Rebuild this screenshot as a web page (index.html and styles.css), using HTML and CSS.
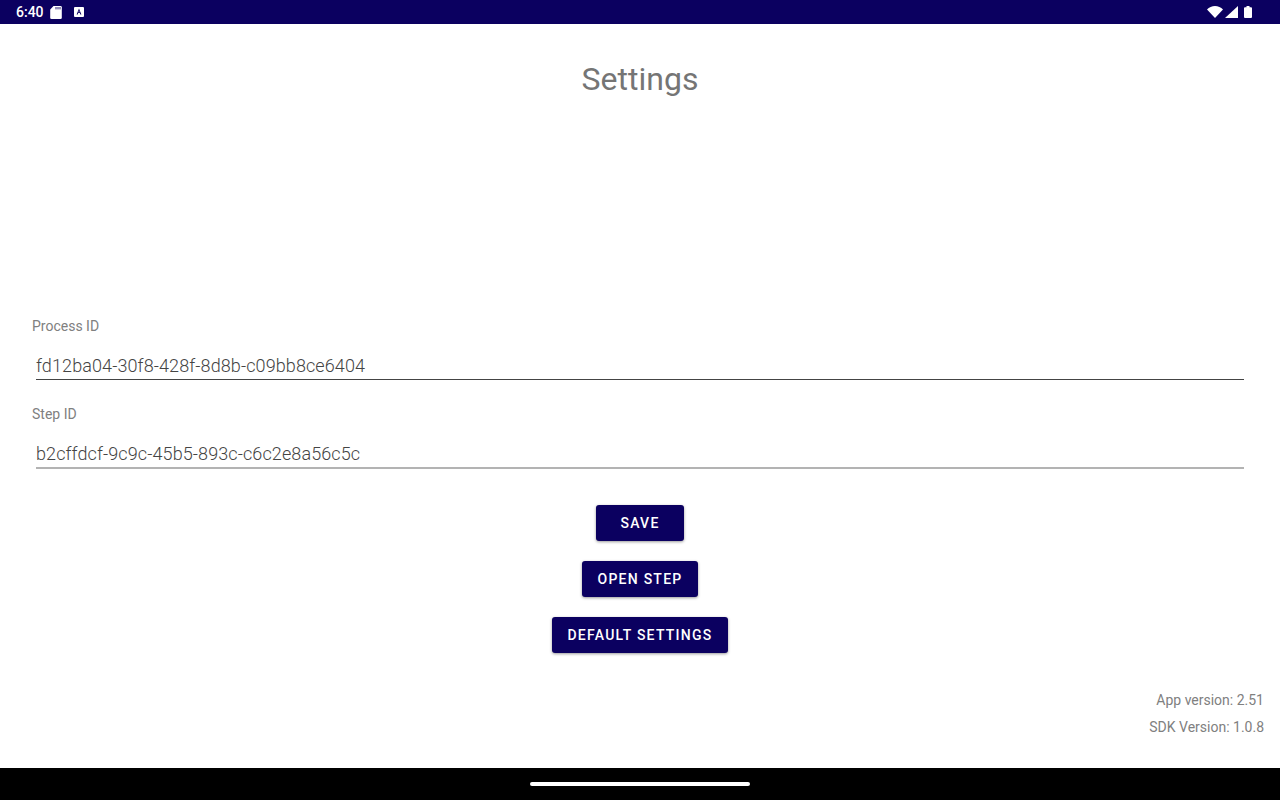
FILE: index.html
```html
<!DOCTYPE html>
<html lang="en">

<head>
    <meta charset="UTF-8">
    <title>Settings</title>
    <link rel="stylesheet" href="styles.css">
</head>

<body>
    <div class="status_bar">
        <div class="status_left">
            <span class="clock">6:40</span>
            <svg class="icon_sd" width="12" height="13" viewBox="0 0 12 13">
                <path d="M3.5 0H10.5a1.3 1.3 0 0 1 1.3 1.3V11.7a1.3 1.3 0 0 1-1.3 1.3H1.5a1.3 1.3 0 0 1-1.3-1.3V3.5Z" fill="#fff" />
                <path d="M6 1V3.4M8 1V3.4M10 1V3.4" stroke="#0b0060" stroke-width=".9" />
            </svg>
            <svg class="icon_a" width="10" height="10" viewBox="0 0 10 10">
                <rect width="10" height="10" rx="1" fill="#fff" />
                <path d="M5 1.6 7.4 7.4H6.3L5.8 6.1H4.2L3.7 7.4H2.6ZM5 3.6 4.5 5.2H5.5Z" fill="#0b0060" />
            </svg>
        </div>
        <div class="status_right">
            <svg class="icon_wifi" width="16" height="12" viewBox="0 0 16 12">
                <path d="M0 3.6C2 1.4 5 0 8 0s6 1.4 8 3.6L8 12Z" fill="#fff" />
            </svg>
            <svg class="icon_signal" width="13" height="12" viewBox="0 0 13 12">
                <path d="M13 0V12H0Z" fill="#fff" />
            </svg>
            <svg class="icon_battery" width="8" height="12" viewBox="0 0 8 12">
                <path d="M2.5 0H5.5V1.2H7a1 1 0 0 1 1 1V11a1 1 0 0 1-1 1H1a1 1 0 0 1-1-1V2.2a1 1 0 0 1 1-1H2.5Z" fill="#fff" />
            </svg>
        </div>
    </div>

    <div class="main">
        <h1 class="title">Settings</h1>

        <div class="form">
            <label class="field_label">Process ID</label>
            <div class="field_value field_focus">fd12ba04-30f8-428f-8d8b-c09bb8ce6404</div>
            <label class="field_label">Step ID</label>
            <div class="field_value">b2cffdcf-9c9c-45b5-893c-c6c2e8a56c5c</div>
        </div>

        <div class="buttons">
            <button class="btn">SAVE</button>
            <button class="btn">OPEN STEP</button>
            <button class="btn">DEFAULT SETTINGS</button>
        </div>

        <div class="versions">
            <p>App version: 2.51</p>
            <p>SDK Version: 1.0.8</p>
        </div>
    </div>

    <div class="nav_bar">
        <div class="home_pill"></div>
    </div>
</body>

</html>
```

FILE: styles.css
```css
* {
    margin: 0;
    padding: 0;
    box-sizing: border-box;
}

body {
    width: 1280px;
    height: 800px;
    display: flex;
    flex-direction: column;
    overflow: hidden;
    background-color: #fff;
    font-family: Roboto, "Liberation Sans", sans-serif;
}

.status_bar {
    display: flex;
    justify-content: space-between;
    align-items: center;
    height: 24px;
    padding: 0 28px 0 16px;
    color: #fff;
    background-color: #0b0060;
}

.status_left,
.status_right {
    display: flex;
    align-items: center;
}

.clock {
    font-size: 14px;
    font-weight: 500;
    margin-right: 6px;
}

.icon_sd {
    margin-right: 12px;
}

.icon_signal {
    margin-left: 2px;
}

.icon_battery {
    margin-left: 6px;
}

.main {
    flex: 1;
    display: flex;
    flex-direction: column;
}

.title {
    margin-top: 36px;
    height: 38px;
    line-height: 38px;
    text-align: center;
    font-size: 32px;
    font-weight: 400;
    color: #757575;
}

.form {
    margin-top: 218px;
    padding: 0 36px 0 32px;
}

.field_label {
    display: block;
    height: 20px;
    line-height: 20px;
    font-size: 14px;
    color: #808080;
}

.field_value {
    margin: 16px 0 0 4px;
    height: 29px;
    line-height: 28px;
    font-size: 18px;
    font-weight: 300;
    letter-spacing: .1px;
    color: #444;
    border-bottom: 2px solid #b3b3b3;
}

.field_focus {
    height: 28px;
    margin-bottom: 24px;
    border-bottom: 1px solid #444;
}

.buttons {
    margin-top: 36px;
    display: flex;
    flex-direction: column;
    align-items: center;
    gap: 20px;
}

.btn {
    min-width: 88px;
    height: 36px;
    padding: 0 15px;
    border: none;
    border-radius: 3px;
    color: #fff;
    background-color: #0b0060;
    font-family: Roboto, "Liberation Sans", sans-serif;
    font-size: 14px;
    font-weight: 500;
    letter-spacing: 1.25px;
    box-shadow: 0 1px 3px rgba(0, 0, 0, .4);
}

.versions {
    margin-top: 34px;
    padding-right: 16px;
    text-align: right;
    font-size: 14px;
    color: #808080;
}

.versions p {
    height: 27px;
    line-height: 27px;
}

.nav_bar {
    display: flex;
    justify-content: center;
    align-items: center;
    height: 32px;
    background-color: #000;
}

.home_pill {
    width: 220px;
    height: 4px;
    border-radius: 2px;
    background-color: #fff;
}
```
